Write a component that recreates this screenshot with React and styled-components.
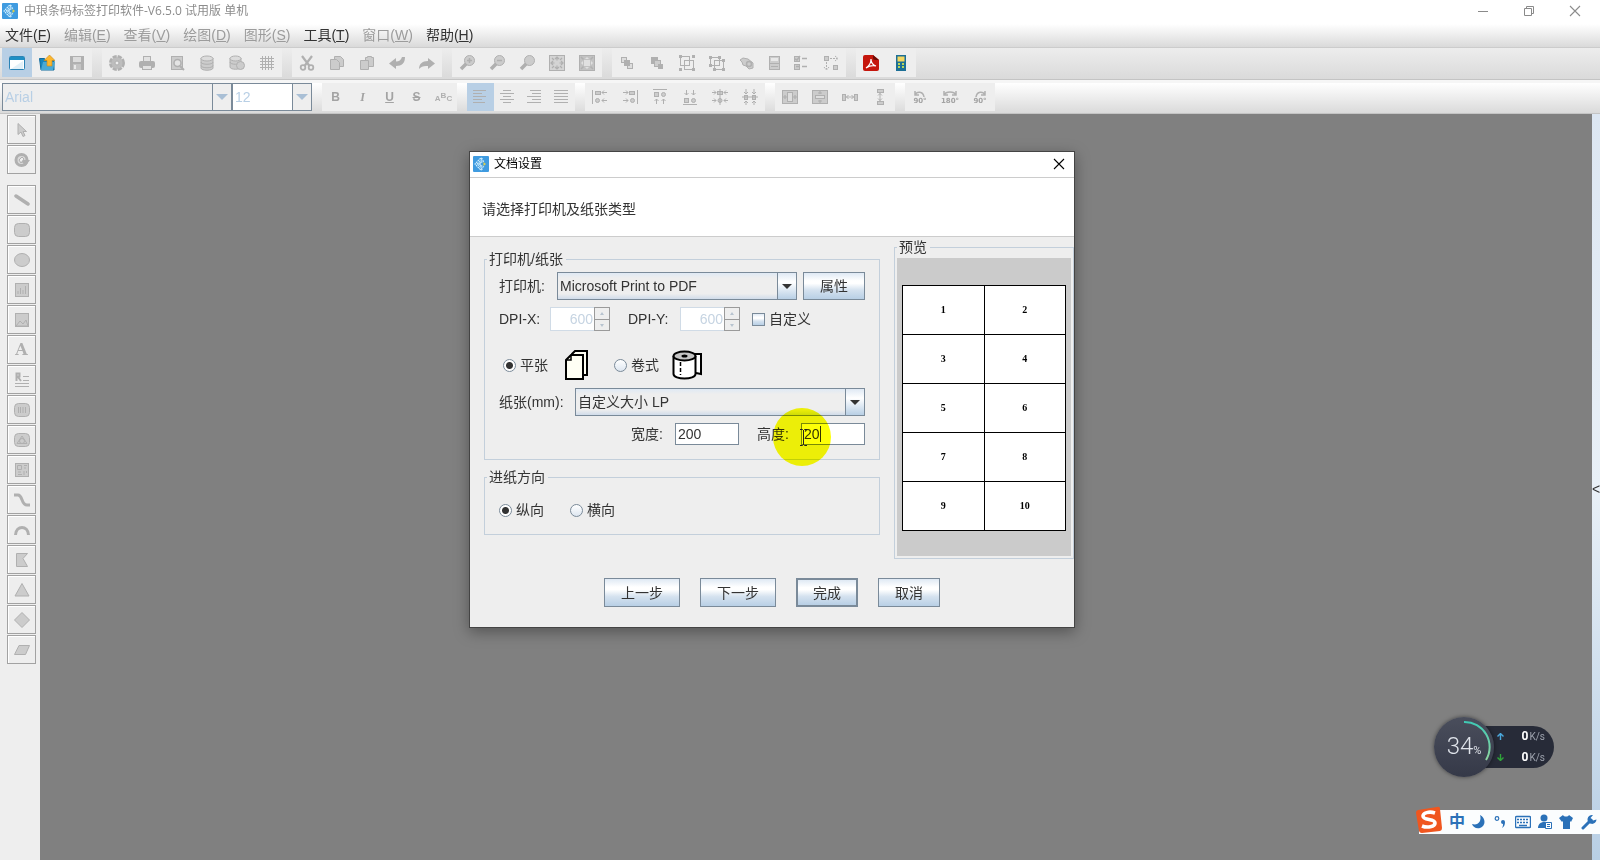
import { useState } from "react";
import styled, { createGlobalStyle, css } from "styled-components";

const GlobalStyle = createGlobalStyle`
  * {
    box-sizing: border-box;
  }

  body {
    margin: 0;
    background: #808080;
  }

  button,
  input,
  select {
    margin: 0;
    font: inherit;
    color: inherit;
  }
`;

const uiFont = `"Liberation Sans", "Noto Sans CJK SC", sans-serif`;

const swingGradient = css`
  background: linear-gradient(
    #dfe9f4 0%,
    #ffffff 30%,
    #ffffff 40%,
    #d5e2ef 65%,
    #b8cfe5 100%
  );
`;

const Page = styled.div`
  display: flex;
  flex-direction: column;
  min-height: 100vh;
  font-family: ${uiFont};
  font-size: 14px;
  line-height: 16px;
  color: #333333;
`;

/* ---------- title bar and menu ---------- */

const TitleBar = styled.header`
  display: flex;
  align-items: center;
  gap: 6px;
  height: 24px;
  padding: 0 17px 2px 2px;
  background: #ffffff;
  font-family: "Open Sans", "Noto Sans CJK SC", sans-serif;
  font-size: 12px;
  color: #8c8c8c;
`;

const AppTitle = styled.h1`
  flex: 1;
  margin: 0;
  font-size: 12px;
  font-weight: 400;
`;

const WindowButtons = styled.div`
  display: flex;
  gap: 30px;
`;

const PlainButton = styled.button`
  display: flex;
  align-items: center;
  justify-content: center;
  width: 16px;
  height: 16px;
  padding: 0;
  border: 0;
  background: none;
`;

const MenuBar = styled.nav`
  display: flex;
  align-items: center;
  gap: 13px;
  height: 24px;
  padding: 0 5px 2px;
  background: linear-gradient(#ffffff, #dadada);
  border-bottom: 1px solid #cccccc;
`;

const MenuItem = styled.button`
  padding: 0;
  border: 0;
  background: none;
  white-space: nowrap;
  color: ${({ disabled }) => (disabled ? "#9c9c9c" : "#333333")};
`;

/* ---------- toolbars ---------- */

const Toolbar = styled.div`
  display: flex;
  align-items: stretch;
  gap: 10px;
  height: ${({ $height }) => $height}px;
  padding: 0 2px 2px;
  background: linear-gradient(${({ $from }) => $from}, #dadada);
  border-bottom: 1px solid #c4c4c4;
`;

const ToolGroup = styled.div`
  display: flex;
  align-items: stretch;
  background: #eeeeee;
`;

const ToolButton = styled.button`
  display: flex;
  align-items: center;
  justify-content: center;
  width: ${({ $width }) => $width || 30}px;
  padding: 0;
  border: 0;
  background: ${({ $selected }) => ($selected ? "#b8cfe5" : "transparent")};
`;

const ToolbarSpacer = styled.div`
  height: 3px;
  background: #f6f6f6;
`;

const Combos = styled.div`
  display: flex;
  align-items: center;
`;

const Select = styled.select`
  appearance: none;
  width: ${({ $width }) => ($width ? `${$width}px` : "auto")};
  flex: ${({ $width }) => ($width ? "none" : "1")};
  height: 28px;
  padding: 0 30px 0 2px;
  border: 1px solid #7a8a99;
  border-radius: 0;
  outline: 0;
  color: #333333;
  opacity: 1;
  background:
    linear-gradient(#7a8a99, #7a8a99) right 18px top 0 / 1px 100% no-repeat,
    url("data:image/svg+xml,%3Csvg xmlns='http://www.w3.org/2000/svg' width='10' height='5'%3E%3Cpath d='M0 0h10L5 5z' fill='%23333'/%3E%3C/svg%3E")
      right 4px center no-repeat,
    linear-gradient(#dfe9f4, #ffffff 35%, #b8cfe5) right / 18px 100% no-repeat,
    linear-gradient(#dfe9f4, #eeeeee 20%, #eeeeee 80%, #d0dcea);

  &:disabled {
    color: #b8cfe5;
    background:
      linear-gradient(#7a8a99, #7a8a99) right 18px top 0 / 1px 100% no-repeat,
      url("data:image/svg+xml,%3Csvg xmlns='http://www.w3.org/2000/svg' width='12' height='6'%3E%3Cpath d='M0 0h12L6 6z' fill='%23a9bfd5'/%3E%3C/svg%3E")
        right 3px center no-repeat,
      linear-gradient(#eeeeee, #eeeeee) right / 18px 100% no-repeat,
      ${({ $fill }) => $fill || "#eeeeee"};
  }
`;

/* ---------- work area ---------- */

const Workspace = styled.main`
  display: flex;
  flex: 1;
  background: #808080;
`;

const SideBar = styled.aside`
  display: flex;
  flex-direction: column;
  gap: 1px;
  width: 40px;
  padding: 1px 4px 0 7px;
  background: #eeeeee;
`;

const SideButton = styled.button`
  display: flex;
  align-items: center;
  justify-content: center;
  width: 29px;
  height: 29px;
  padding: 0;
  margin-top: ${({ $spaced }) => ($spaced ? 10 : 0)}px;
  border: 1px solid #a2a2a2;
  background: #eeeeee;
  box-shadow: inset 1px 1px 0 #ffffff;
`;

const Canvas = styled.section`
  position: relative;
  flex: 1;
`;

const CollapseStrip = styled.button`
  display: flex;
  align-items: center;
  justify-content: center;
  width: 8px;
  padding: 4px 0 0 0;
  border: 0;
  background: linear-gradient(#dce6f2, #e9f0f7 50%, #b8cfe5);
`;

/* ---------- dialog ---------- */

const Dialog = styled.div`
  position: absolute;
  left: 429px;
  top: 37px;
  width: 606px;
  border: 1px solid #444444;
  background: #eeeeee;
  box-shadow: 0 4px 14px rgba(0, 0, 0, 0.35);
`;

const DialogTitle = styled.div`
  display: flex;
  align-items: center;
  gap: 5px;
  height: 26px;
  padding: 0 7px 1px 3px;
  background: #ffffff;
  border-bottom: 1px solid #cccccc;
  color: #000000;
`;

const DialogName = styled.h2`
  flex: 1;
  margin: 0;
  font-size: 12px;
  font-weight: 400;
`;

const DialogHeading = styled.p`
  display: flex;
  align-items: center;
  height: 59px;
  margin: 0;
  padding: 4px 12px 0;
  background: #ffffff;
  border-bottom: 1px solid #cccccc;
`;

const DialogBody = styled.div`
  display: flex;
  gap: 14px;
  padding-left: 14px;
`;

const Settings = styled.div`
  display: flex;
  flex-direction: column;
  gap: 9px;
  width: 396px;
  padding-top: 14px;
`;

const Group = styled.fieldset`
  min-width: 0;
  margin: 0;
  padding: ${({ $padding }) => $padding};
  border: 1px solid #c3cfdb;
`;

const Legend = styled.legend`
  height: 16px;
  margin-left: ${({ $indent }) => $indent || 0}px;
  padding: 0 3px 0 2px;
  white-space: nowrap;
`;

const Row = styled.div`
  display: flex;
  align-items: center;
  justify-content: ${({ $end }) => ($end ? "flex-end" : "flex-start")};
  height: ${({ $height }) => $height}px;
  margin-top: ${({ $space }) => $space || 0}px;
`;

const Label = styled.label`
  width: ${({ $width }) => $width}px;
  flex: none;
  white-space: nowrap;
`;

const Button = styled.button`
  ${swingGradient}
  height: ${({ $height }) => $height || 28}px;
  width: ${({ $width }) => $width}px;
  padding: 0;
  margin-left: ${({ $space }) => $space || 0}px;
  border: ${({ $primary }) => ($primary ? 2 : 1)}px solid #7a8a99;
`;

const Spinner = styled.div`
  display: flex;
  width: 60px;
  height: 24px;
  margin-right: ${({ $space }) => $space}px;
`;

const SpinnerInput = styled.input`
  width: 44px;
  padding: 0 1px;
  border: 1px solid #d0dbe6;
  border-right: 0;
  background: #ffffff;
  color: #c6d4e2;
  text-align: right;
`;

const SpinnerButtons = styled.div`
  display: grid;
  grid-template-rows: 1fr 1fr;
  width: 16px;
  border: 1px solid #9a9a9a;
`;

const SpinnerButton = styled.button`
  display: flex;
  align-items: center;
  justify-content: center;
  padding: 0;
  border: 0;
  background: #eeeeee;

  & + & {
    border-top: 1px solid #9a9a9a;
  }
`;

const Choice = styled.label`
  display: flex;
  align-items: center;
  gap: ${({ $gap }) => $gap || 4}px;
  margin-right: ${({ $space }) => $space || 0}px;
  white-space: nowrap;
`;

const PaperChoices = styled.div`
  display: flex;
  padding-left: 4px;
`;

const CheckBox = styled.input`
  ${swingGradient}
  appearance: none;
  width: 13px;
  height: 13px;
  border: 1px solid #7a8a99;
`;

const Radio = styled.input`
  appearance: none;
  width: 13px;
  height: 13px;
  border: 1px solid #7a8a99;
  border-radius: 50%;
  background: linear-gradient(#ffffff, #dde6f0);

  &:checked {
    background: radial-gradient(circle, #333333 3px, transparent 4px), #ffffff;
  }
`;

const SizeInput = styled.input`
  width: 64px;
  height: 22px;
  padding: 0 2px;
  border: 1px solid #7a8a99;
  outline: 0;
  background: #ffffff;
  caret-color: transparent;
`;

const SizeField = styled.div`
  position: relative;
  display: flex;
  margin-right: ${({ $space }) => $space || 0}px;
`;

const PointerHalo = styled.span`
  position: absolute;
  left: -28px;
  top: -15px;
  width: 58px;
  height: 58px;
  border-radius: 50%;
  background: #fdff08;
  mix-blend-mode: multiply;
  pointer-events: none;
`;

const Caret = styled.span`
  position: absolute;
  left: 19px;
  top: 3px;
  width: 1px;
  height: 16px;
  background: #333333;
`;

const PointerMark = styled.svg`
  position: absolute;
  left: -1px;
  top: 6px;
  pointer-events: none;
`;

const Preview = styled.div`
  display: flex;
  flex: 1;
  flex-direction: column;
  padding-top: 2px;
`;

const PreviewPane = styled.div`
  padding: 27px 5px 25px;
  background: #cbcbcb;
`;

const LabelTable = styled.table`
  width: 100%;
  border-collapse: collapse;
  background: #ffffff;
  font-family: "Liberation Serif", serif;
  font-size: 10px;
  font-weight: 700;
  line-height: 12px;
  color: #000000;

  td {
    width: 50%;
    height: 49px;
    padding: 0;
    border: 1px solid #000000;
    text-align: center;
  }
`;

const Footer = styled.div`
  display: flex;
  justify-content: center;
  gap: 20px;
  padding: 19px 0 20px;
`;

/* ---------- floating widgets ---------- */

const NetMonitor = styled.div`
  position: absolute;
  right: 38px;
  bottom: 83px;
  display: flex;
  align-items: center;
  color: #dfe3ea;
`;

const Gauge = styled.div`
  position: relative;
  z-index: 1;
  display: flex;
  align-items: baseline;
  justify-content: center;
  width: 60px;
  height: 60px;
  padding-top: 17px;
  border-radius: 50%;
  background: linear-gradient(#4a4e5c, #353948);
  box-shadow: 0 0 4px rgba(0, 0, 0, 0.5);
  font-family: Roboto, sans-serif;
  font-size: 24px;
  font-weight: 300;
  line-height: 24px;

  small {
    font-size: 11px;
    font-weight: 400;
  }
`;

const GaugeArc = styled.svg`
  position: absolute;
  inset: 0;
`;

const Rates = styled.div`
  display: flex;
  flex-direction: column;
  justify-content: space-between;
  width: 90px;
  height: 42px;
  margin-left: -30px;
  padding: 2px 9px 2px 33px;
  border-radius: 0 21px 21px 0;
  background: #272b38;
`;

const Rate = styled.div`
  display: flex;
  align-items: center;
  justify-content: space-between;
  font-family: Roboto, sans-serif;
  font-size: 10px;
  color: #9ea3ae;

  b {
    margin-right: 1px;
    font-size: 12px;
    color: #ffffff;
  }
`;

const ImeBar = styled.div`
  position: absolute;
  right: -8px;
  bottom: 26px;
  display: flex;
  align-items: center;
  gap: 6px;
  height: 24px;
  padding: 0 3px 0 30px;
  background: #fbfdfe;
  font-size: 16px;
  font-weight: 700;
  color: #2b71b8;
`;

const ImeLogo = styled.svg`
  position: absolute;
  left: -5px;
  top: -5px;
`;

/* ---------- icons ---------- */

const G = "#cccccc";
const S = "#b0b0b0";

const box = (x, y, w, h, fill = G) => (
  <rect x={x + 0.5} y={y + 0.5} width={w} height={h} fill={fill} stroke={S} />
);

const line = (d, width = 1) => (
  <path d={d} fill="none" stroke={S} strokeWidth={width} />
);

const shape = (d) => <path d={d} fill={G} stroke={S} />;

const icons = {
  newDoc: (
    <>
      <rect x="0.5" y="1.5" width="15" height="13" rx="1" fill="#fff" stroke="#2b83b5" />
      <rect x="1" y="2" width="14" height="3" fill="#1f8fc4" />
      <path d="M2 14 14 6v8z" fill="#e2f0f8" />
    </>
  ),
  open: (
    <>
      <path d="M0.5 3.5h5l1 2H15v9.500H2z" fill="#1785bd" stroke="#0f6a9c" />
      <path d="M2 15 4 7h12l-2 8z" fill="#49a9d6" />
      <path d="M10.500 0 16 5.500h-3V11H8V5.500H5z" fill="#fbb62e" stroke="#c98a17" strokeWidth=".6" />
    </>
  ),
  save: (
    <>
      <rect x="1" y="1" width="14" height="14" fill={S} />
      <rect x="4" y="2" width="8" height="5" fill="#dcdcdc" />
      <rect x="4" y="9" width="8" height="6" fill="#c4c4c4" />
      <rect x="5" y="10" width="2" height="4" fill="#e8e8e8" />
    </>
  ),
  gear: (
    <>
      <circle cx="8" cy="8" r="6.500" fill={G} stroke={S} strokeWidth="3" strokeDasharray="4 1.100" />
      <circle cx="8" cy="8" r="5.500" fill="#bdbdbd" />
      <circle cx="8" cy="8" r="2" fill="#eee" stroke={S} />
    </>
  ),
  print: (
    <>
      {box(4, 1, 7, 5, "#e2e2e2")}
      <rect x="0" y="6" width="16" height="7" rx="2" fill={S} />
      {box(3, 10, 9, 4, "#e2e2e2")}
    </>
  ),
  previewDoc: (
    <>
      {box(2, 1, 11, 13)}
      <circle cx="8.500" cy="8" r="3.500" fill="#e4e4e4" stroke={S} strokeWidth="1.500" />
      {line("m11 11 4 4", 2)}
    </>
  ),
  database: (
    <>
      <path d="M2 3v10c0 3 12 3 12 0V3" fill={G} stroke={S} />
      <ellipse cx="8" cy="3.500" rx="6" ry="2.500" fill="#dcdcdc" stroke={S} />
      {line("M2 7c0 3 12 3 12 0M2 10.500c0 3 12 3 12 0")}
    </>
  ),
  databaseEdit: (
    <>
      <path d="M1 3v9c0 3 11 3 11 0V3" fill={G} stroke={S} />
      <ellipse cx="6.500" cy="3.500" rx="5.500" ry="2.500" fill="#dcdcdc" stroke={S} />
      {line("M1 7c0 3 11 3 11 0")}
      <circle cx="11.500" cy="10.500" r="4" fill={G} stroke={S} />
    </>
  ),
  grid: line("M3.500 1v14M6.500 1v14M9.500 1v14M12.500 1v14M1 3.500h14M1 6.500h14M1 9.500h14M1 12.500h14"),
  cut: (
    <>
      {line("M3 1l7.500 10M13 1 5.500 11", 2.2)}
      <circle cx="4" cy="12.500" r="2.300" fill="none" stroke={S} strokeWidth="1.800" />
      <circle cx="12" cy="12.500" r="2.300" fill="none" stroke={S} strokeWidth="1.800" />
    </>
  ),
  copy: (
    <>
      {shape("M5.500 1.500h6l3 3v7h-9z")}
      {shape("M1.500 4.500h6l3 3v7h-9z")}
    </>
  ),
  paste: (
    <>
      {shape("M6.500 2.500h2v-1h4v1h2v9h-8z")}
      {shape("M1.500 5.500h8v9h-8z")}
    </>
  ),
  undo: <path d="M0 8.500 7 3v3.500c3 0 5-1.500 6-4.500h3c0 6-3 9-9 9v3z" fill={S} />,
  redo: <path d="M16 8.500 9 3v3C3 6 0 9 0 14c2-2.500 5-3.500 9-3v3z" fill={S} />,
  zoomIn: (
    <>
      {line("M8 8 2 14", 3.5)}
      <circle cx="10.500" cy="5.500" r="5" fill={G} stroke={S} />
      {line("M8 5.500h5M10.500 3v5", 1.5)}
    </>
  ),
  zoomOut: (
    <>
      {line("M8 8 2 14", 3.5)}
      <circle cx="10.500" cy="5.500" r="5" fill={G} stroke={S} />
      {line("M8 5.500h5", 1.5)}
    </>
  ),
  zoom: (
    <>
      {line("M8 8 2 14", 3.5)}
      <circle cx="10.500" cy="5.500" r="5" fill={G} stroke={S} />
    </>
  ),
  fit: (
    <>
      {box(0, 0, 15, 15, "#d4d4d4")}
      {line("M8 1.500v4M8 10.500v4M1.500 8h4M10.500 8h4M6 4l2-2 2 2M6 12l2 2 2-2M4 6 2 8l2 2M12 6l2 2-2 2M3 3l2 2M13 3l-2 2M3 13l2-2M13 13l-2-2", 1.2)}
    </>
  ),
  fitAll: (
    <>
      {box(0, 0, 15, 15, "#c2c2c2")}
      <rect x="5" y="5" width="6" height="6" fill="#e0e0e0" />
      <path d="M6 4l2-2 2 2zM6 12l2 2 2-2zM4 6 2 8l2 2zM12 6l2 2-2 2z" fill="#e0e0e0" />
      {line("M2 2l2.500 2.500M14 2l-2.500 2.500M2 14l2.500-2.500M14 14l-2.500-2.500", 1.5)}
    </>
  ),
  front: (
    <>
      {box(2, 2, 5, 5, "#ddd")}
      {box(8, 8, 5, 5, "#ddd")}
      <rect x="5" y="5" width="6" height="6" fill={S} />
    </>
  ),
  back: (
    <>
      <rect x="2" y="2" width="7" height="7" fill={S} />
      {box(5, 5, 6, 6)}
      <rect x="9" y="9" width="5" height="5" fill={S} />
    </>
  ),
  group: (
    <>
      {box(1, 1, 9, 9, "none")}
      {box(5, 5, 9, 9, "none")}
      <path d="M0 0h3v3H0zM13 0h3v3h-3zM0 13h3v3H0zM13 13h3v3h-3z" fill={S} />
    </>
  ),
  ungroup: (
    <>
      {box(1, 2, 9, 8, "none")}
      {box(5, 5, 9, 9, "none")}
      <path d="M0 1h3v3H0zM9 1h3v3H9zM0 9h3v3H0zM4 13h3v3H4zM13 4h3v3h-3zM13 13h3v3h-3z" fill={S} />
    </>
  ),
  lock: (
    <>
      {shape("M1 5l3-2 5 1 5 4v5l-4 1-3-3-3-1-1-3z")}
      <circle cx="10" cy="9" r="2.500" fill="none" stroke={S} strokeWidth="1.500" />
    </>
  ),
  book: (
    <>
      {box(3, 1, 10, 13)}
      <rect x="5" y="3" width="7" height="3" fill="#e8e8e8" />
      {line("M3 8.500h11M5 11.500h7")}
    </>
  ),
  checklist: (
    <>
      {box(1, 1, 5, 5)}
      {box(1, 9, 5, 5)}
      {line("M9 3.500h5M9 11.500h5M2 4l2 1 3-4M3 11.500h3", 1.500)}
    </>
  ),
  swap: (
    <>
      {box(1, 1, 4, 4)}
      {box(10, 10, 4, 4)}
      <path d="M7 3.500h7M12 1l3 2.500L12 6M3.500 7v7M1 12l2.500 3L6 12" fill="none" stroke={S} strokeDasharray="2 1" />
    </>
  ),
  pdf: (
    <>
      <path d="M2 0h8l6 5v9a2 2 0 0 1-2 2H2a2 2 0 0 1-2-2V2a2 2 0 0 1 2-2z" fill="#c5160c" />
      <path d="M10 0l6 5h-4a2 2 0 0 1-2-2z" fill="#6d0c06" />
      <path d="M3 13c3-2 5-6 5-9 0 4 2 6 5 7-4-1-7 0-10 2z" fill="none" stroke="#fff" strokeWidth="1.200" />
    </>
  ),
  calculator: (
    <>
      <rect x="3" y="0" width="10" height="16" fill="#1c6f96" />
      <rect x="4.500" y="1.500" width="7" height="5" fill="#f5d860" />
      <path d="M5 8h2v2H5zM9 8h2v2H9zM5 11h2v2H5zM9 11h2v2H9z" fill="#b9d65a" />
    </>
  ),
  alignLeft: line("M0 1.500h13M0 4.500h9M0 7.500h13M0 10.500h9M0 13.500h12"),
  alignCenter: line("M3 1.500h8M0 4.500h14M3 7.500h8M0 10.500h14M3 13.500h8"),
  alignRight: line("M3 1.500h11M5 4.500h9M0 7.500h14M5 10.500h9M0 13.500h14"),
  alignFull: line("M0 1.500h14M0 4.500h14M0 7.500h14M0 10.500h14M0 13.500h14"),
  objLeft: (
    <>
      {box(3, 2, 5, 3)}
      <circle cx="5.500" cy="11.500" r="2" fill={G} stroke={S} />
      {line("M0.500 1v14M10 3.500h5M12 1.500l-2 2 2 2M10 11.500h5M12 9.500l-2 2 2 2")}
    </>
  ),
  objRight: (
    <>
      {box(7, 2, 5, 3)}
      <circle cx="10.500" cy="11.500" r="2" fill={G} stroke={S} />
      {line("M15.500 1v14M1 3.500h5M4 1.500l2 2-2 2M1 11.500h5M4 9.500l2 2-2 2")}
    </>
  ),
  objTop: (
    <>
      {box(2, 3, 4, 4)}
      <circle cx="11.500" cy="5.500" r="2" fill={G} stroke={S} />
      {line("M1 .500h14M4.500 15v-5M2.500 12l2-2 2 2M11.500 15v-5M9.500 12l2-2 2 2")}
    </>
  ),
  objBottom: (
    <>
      {box(2, 9, 4, 4)}
      <circle cx="11.500" cy="11.500" r="2" fill={G} stroke={S} />
      {line("M1 15.500h14M4.500 1v5M2.500 4l2 2 2-2M11.500 1v5M9.500 4l2 2 2-2")}
    </>
  ),
  objCenterV: (
    <>
      {box(5, 2, 5, 3)}
      <circle cx="8" cy="11.500" r="2" fill={G} stroke={S} />
      {line("M8 0v16M0 3.500h4M2 1.500l2 2-2 2M16 3.500h-4M14 1.500l-2 2 2 2M0 11.500h4M2 9.500l2 2-2 2M16 11.500h-4M14 9.500l-2 2 2 2")}
    </>
  ),
  objCenterH: (
    <>
      {box(2, 6, 3, 4)}
      {box(10, 6, 3, 4)}
      {line("M0 8h16M4 0v5M2 3l2 2 2-2M4 16v-4M2 14l2-2 2 2M12 0v5M10 3l2 2 2-2M12 16v-4M10 14l2-2 2 2")}
    </>
  ),
  pageCenterH: (
    <>
      {box(0, 1, 15, 13)}
      {box(5, 3, 5, 9, "#dedede")}
      {line("M1 8h4M11 8h4M3 6v4M13 6v4", 1.2)}
    </>
  ),
  pageCenterV: (
    <>
      {box(0, 1, 15, 13)}
      {box(3, 6, 9, 3, "#dedede")}
      {line("M8 2v3M8 11v3M6 4h4M6 12h4", 1.2)}
    </>
  ),
  spaceH: (
    <>
      {box(0, 5, 3, 6)}
      {box(12, 5, 3, 6)}
      {line("M4 8h8M6.500 6l-2 2 2 2M9.500 6l2 2-2 2")}
    </>
  ),
  spaceV: (
    <>
      {box(5, 0, 6, 3)}
      {box(5, 12, 6, 3)}
      {line("M8 4v8M6 6.500l2-2 2 2M6 9.500l2 2 2-2")}
    </>
  ),
  pointer: shape("M4 1.500v11l3-2.500 2 4.500 2-1-2-4h3.500z"),
  rotateHand: (
    <>
      <circle cx="7.500" cy="8" r="5.500" fill="#dadada" stroke={S} strokeWidth="3" />
      <path d="M6 8h10l-4.500 6z" fill={S} />
      <path d="M5 8l3-3 2 2-3 4z" fill="#eee" stroke={S} />
    </>
  ),
  pen: <path d="M2 4 14 12" stroke={S} strokeWidth="3.500" strokeLinecap="round" />,
  roundRect: <rect x="0.500" y="1.500" width="15" height="13" rx="4" fill={G} stroke={S} />,
  ellipse: <ellipse cx="8" cy="8" rx="7.500" ry="6.500" fill={G} stroke={S} />,
  barcode: (
    <>
      {box(1, 1, 13, 13)}
      {line("M4 12V9M6.500 12V6M9 12V8M11.500 12V4")}
    </>
  ),
  picture: (
    <>
      {box(1, 1, 13, 13)}
      {shape("M2 14l4-5 3 3 3-4 2 6z")}
    </>
  ),
  richText: (
    <>
      {line("M2.500 9V1.500h3v3h-3M4 5l3 4", 2)}
      {line("M9 4.500h6M9 8.500h6M1 11.500h14M1 14.500h14")}
    </>
  ),
  barcodeRound: (
    <>
      <rect x="0.500" y="1.500" width="15" height="13" rx="4" fill={G} stroke={S} />
      {line("M4.500 5v6M6.500 5v6M9 5v6M11.500 5v6")}
    </>
  ),
  shapeRound: (
    <>
      <rect x="0.500" y="1.500" width="15" height="13" rx="4" fill={G} stroke={S} />
      {line("M3 11.500 8 4l5 7.500z")}
      <circle cx="8" cy="9" r="2.500" fill="none" stroke={S} />
    </>
  ),
  qr: (
    <>
      {box(1, 1, 13, 13)}
      {line("M3.500 3.500h4v4h-4zM10 3.500h3M10 6h2M4 10h3M4 12.500h4M10 9v4M12.500 9v2")}
    </>
  ),
  sCurve: line("M0 3h4c5 0 3 10 9 10h3", 3),
  arc: line("M1.500 13C2 3 14 3 14.500 13", 3),
  polygon: shape("M2.500 1.500h11L9 6.500l4.500 8h-11z"),
  triangle: shape("M8 1.500 15 14H1z"),
  diamond: shape("M8 .500 15.500 8 8 15.500.500 8z"),
  parallelogram: shape("M5 3.500h10.500l-4 9H.500z"),
  minimise: <path d="M3 8.500h10" stroke="#8a8a8a" />,
  restore: <path d="M3.500 5.500h7v7h-7zM5.500 5V3.500h7v7H11" fill="none" stroke="#8a8a8a" />,
  close: <path d="M3 3l10 10M13 3 3 13" stroke="currentColor" strokeWidth="1.100" />,
};

const Icon = ({ name, size = 16 }) => (
  <svg width={size} height={size} viewBox="0 0 16 16" aria-hidden="true">
    {icons[name]}
  </svg>
);

const Glyph = styled.span`
  font-size: 12px;
  line-height: 14px;
  font-weight: 700;
  font-style: ${({ $italic }) => ($italic ? "italic" : "normal")};
  font-family: ${({ $serif }) => ($serif ? `"Liberation Serif", serif` : uiFont)};
  text-decoration: ${({ $line }) => $line || "none"};
  color: #a3a3a3;
`;

const CurvedText = styled.span`
  display: flex;
  font-size: 8px;
  line-height: 10px;
  font-weight: 700;
  color: #b0b0b0;

  span:nth-child(2) {
    padding-bottom: 3px;
  }

  span:nth-child(odd) {
    padding-top: 3px;
  }
`;

const LetterA = styled.span`
  font-family: "DejaVu Serif", serif;
  font-size: 16px;
  font-weight: 700;
  color: #b0b0b0;
`;

const Turn = styled.span`
  display: flex;
  flex-direction: column;
  align-items: center;
  font-family: "DejaVu Sans", sans-serif;
  font-size: 7px;
  line-height: 7px;
  font-weight: 700;
  color: #a3a3a3;
`;

const AppLogo = () => (
  <svg width="16" height="16" viewBox="0 0 16 16" aria-hidden="true">
    <rect width="16" height="16" rx="1" fill="#3f9be0" />
    <g fill="none" stroke="#d9f3ff" strokeWidth="1.100">
      <path d="M9.500 3 8 1.800 2 8l6 6.200L9.500 13" strokeDasharray="1.800 .6" />
      <path d="M11 5.500 8.500 3.800 4.300 8l4.200 4.200L11 10.500" strokeDasharray="1.800 .6" />
      <path d="M9.500 6 8.500 5.800 6.500 8l2 2.200 1-.2" />
    </g>
    <path d="M10.500 6l2.500 2-2.500 2z" fill="#e0d24c" />
  </svg>
);

const SheetIcon = () => (
  <svg width="24" height="30" viewBox="0 0 24 30" aria-hidden="true">
    <path d="M7 6V4l3-3h12v24h-4" fill="#fffff4" stroke="#000" strokeWidth="2" />
    <path d="M1 10l5-5h12v24H1z" fill="#fffff4" stroke="#000" strokeWidth="2" />
    <path d="M1 10h5V5" fill="none" stroke="#000" strokeWidth="1.500" />
  </svg>
);

const RollIcon = () => (
  <svg width="31" height="30" viewBox="0 0 31 30" aria-hidden="true">
    <path d="M22 4h7v20l-5-1" fill="#fff" stroke="#000" strokeWidth="2" />
    <path d="M1.500 6v18c0 6 22 6 22 0V6" fill="#fff" stroke="#000" strokeWidth="2" />
    <ellipse cx="12.500" cy="6" rx="11" ry="4.500" fill="#c4c4c4" stroke="#000" strokeWidth="2" />
    <ellipse cx="12.500" cy="6" rx="3" ry="1.500" fill="#000" />
    <path d="M8.500 12v13" stroke="#000" strokeWidth="1.500" strokeDasharray="4 2" />
  </svg>
);

/* ---------- data ---------- */

const menus = [
  { name: "文件", key: "F" },
  { name: "编辑", key: "E", off: true },
  { name: "查看", key: "V", off: true },
  { name: "绘图", key: "D", off: true },
  { name: "图形", key: "S", off: true },
  { name: "工具", key: "T" },
  { name: "窗口", key: "W", off: true },
  { name: "帮助", key: "H" },
];

const mainTools = [
  ["newDoc", "open", "save"],
  ["gear", "print", "previewDoc", "database", "databaseEdit", "grid"],
  ["cut", "copy", "paste", "undo", "redo"],
  ["zoomIn", "zoomOut", "zoom", "fit", "fitAll"],
  ["front", "back", "group", "ungroup", "lock", "book", "checklist", "swap"],
  ["pdf", "calculator"],
];

const textAligns = ["alignLeft", "alignCenter", "alignRight", "alignFull"];
const objectAligns = ["objLeft", "objRight", "objTop", "objBottom", "objCenterV", "objCenterH"];
const pageAligns = ["pageCenterH", "pageCenterV", "spaceH", "spaceV"];

const turns = [
  { text: "90°", path: "M2 1v4h4M2 5c2-4 8-4 9 2" },
  { text: "180°", path: "M1 1v4h4M1 5c2-4 10-4 12 0M13 1v4H9" },
  { text: "90°", path: "M12 1v4H8M12 5c-2-4-8-4-9 2" },
];

const drawTools = [
  "pointer", "rotateHand", "pen", "roundRect", "ellipse", "barcode", "picture", "letter",
  "richText", "barcodeRound", "shapeRound", "qr", "sCurve", "arc", "polygon", "triangle",
  "diamond", "parallelogram",
];

const labelRows = [[1, 2], [3, 4], [5, 6], [7, 8], [9, 10]];

/* ---------- parts ---------- */

const DpiSpinner = ({ id, space }) => (
  <Spinner $space={space}>
    <SpinnerInput id={id} type="text" value="600" disabled readOnly />
    <SpinnerButtons>
      <SpinnerButton disabled aria-label="增加">
        <svg width="4" height="3"><path d="M0 3 2 0l2 3z" fill="#b8c4d0" /></svg>
      </SpinnerButton>
      <SpinnerButton disabled aria-label="减少">
        <svg width="4" height="3"><path d="M0 0h4L2 3z" fill="#b8c4d0" /></svg>
      </SpinnerButton>
    </SpinnerButtons>
  </Spinner>
);

const DocumentDialog = () => {
  const [custom, setCustom] = useState(false);
  const [paper, setPaper] = useState("sheet");
  const [direction, setDirection] = useState("portrait");
  const [width, setWidth] = useState("200");
  const [height, setHeight] = useState("20");

  return (
    <Dialog role="dialog" aria-labelledby="dialog-name">
      <DialogTitle>
        <AppLogo />
        <DialogName id="dialog-name">文档设置</DialogName>
        <PlainButton aria-label="关闭"><Icon name="close" /></PlainButton>
      </DialogTitle>
      <DialogHeading>请选择打印机及纸张类型</DialogHeading>

      <DialogBody>
        <Settings>
          <Group $padding="5px 14px 14px">
            <Legend $indent={-12}>打印机/纸张</Legend>
            <Row $height={28}>
              <Label $width={58} htmlFor="printer">打印机:</Label>
              <Select id="printer">
                <option>Microsoft Print to PDF</option>
              </Select>
              <Button type="button" $width={62} $space={6}>属性</Button>
            </Row>
            <Row $height={24} $space={7}>
              <Label $width={51} htmlFor="dpi-x">DPI-X:</Label>
              <DpiSpinner id="dpi-x" space={18} />
              <Label $width={52} htmlFor="dpi-y">DPI-Y:</Label>
              <DpiSpinner id="dpi-y" space={12} />
              <Choice>
                <CheckBox
                  type="checkbox"
                  checked={custom}
                  onChange={(e) => setCustom(e.target.checked)}
                />
                自定义
              </Choice>
            </Row>
            <Row $height={30} $space={19}>
              <PaperChoices>
                <Choice $space={25} $gap={17}>
                  <Choice as="span">
                    <Radio type="radio" name="paper" checked={paper === "sheet"} onChange={() => setPaper("sheet")} />
                    平张
                  </Choice>
                  <SheetIcon />
                </Choice>
                <Choice $gap={13}>
                  <Choice as="span">
                    <Radio type="radio" name="paper" checked={paper === "roll"} onChange={() => setPaper("roll")} />
                    卷式
                  </Choice>
                  <RollIcon />
                </Choice>
              </PaperChoices>
            </Row>
            <Row $height={28} $space={8}>
              <Label $width={76} htmlFor="paper-size">纸张(mm):</Label>
              <Select id="paper-size">
                <option>自定义大小 LP</option>
              </Select>
            </Row>
            <Row $height={22} $space={7} $end>
              <Label $width={44} htmlFor="width">宽度:</Label>
              <SizeField $space={18}>
                <SizeInput id="width" type="text" value={width} onChange={(e) => setWidth(e.target.value)} />
              </SizeField>
              <Label $width={44} htmlFor="height">高度:</Label>
              <SizeField>
                <SizeInput id="height" type="text" value={height} onChange={(e) => setHeight(e.target.value)} />
                <Caret />
                <PointerHalo />
                <PointerMark width="7" height="17" viewBox="0 0 7 17">
                  <path d="M0 .5h2.500l1 1 1-1H7M3.500 1v15M0 16.500h2.500l1-1 1 1H7" fill="none" stroke="#222" />
                </PointerMark>
              </SizeField>
            </Row>
          </Group>

          <Group $padding="13px 14px 12px">
            <Legend $indent={-12}>进纸方向</Legend>
            <Row $height={24}>
              <Choice $space={26}>
                <Radio type="radio" name="direction" checked={direction === "portrait"} onChange={() => setDirection("portrait")} />
                纵向
              </Choice>
              <Choice>
                <Radio type="radio" name="direction" checked={direction === "landscape"} onChange={() => setDirection("landscape")} />
                横向
              </Choice>
            </Row>
          </Group>
        </Settings>

        <Preview>
          <Group $padding="3px 2px 2px">
            <Legend>预览</Legend>
            <PreviewPane>
              <LabelTable>
                <tbody>
                  {labelRows.map((row) => (
                    <tr key={row[0]}>
                      {row.map((n) => (
                        <td key={n}>{n}</td>
                      ))}
                    </tr>
                  ))}
                </tbody>
              </LabelTable>
            </PreviewPane>
          </Group>
        </Preview>
      </DialogBody>

      <Footer>
        <Button type="button" $width={76} $height={29}>上一步</Button>
        <Button type="button" $width={76} $height={29}>下一步</Button>
        <Button type="button" $width={62} $height={29} $primary>完成</Button>
        <Button type="button" $width={62} $height={29}>取消</Button>
      </Footer>
    </Dialog>
  );
};

const NetworkWidget = () => (
  <NetMonitor>
    <Gauge>
      34<small>%</small>
      <GaugeArc width="60" height="60" viewBox="0 0 60 60">
        <defs>
          <linearGradient id="arc" x2="0" y2="1">
            <stop offset="0" stopColor="#3fc9b4" />
            <stop offset="1" stopColor="#8fd6a0" />
          </linearGradient>
        </defs>
        <path d="M30 5a25 25 0 0 1 22 38" fill="none" stroke="url(#arc)" strokeWidth="2" />
      </GaugeArc>
    </Gauge>
    <Rates>
      {["#4aa8dc", "#2fa53a"].map((color, i) => (
        <Rate key={color}>
          <svg width="7" height="7" viewBox="0 0 7 7">
            <path
              d={i ? "M3.500 0v6M.500 3.500l3 3 3-3" : "M3.500 7V1M.500 3.500l3-3 3 3"}
              fill="none"
              stroke={color}
              strokeWidth="1.400"
            />
          </svg>
          <span><b>0</b>K/s</span>
        </Rate>
      ))}
    </Rates>
  </NetMonitor>
);

const InputMethodBar = () => (
  <ImeBar>
    <ImeLogo width="30" height="30" viewBox="0 0 30 30">
      <path d="M4 5 23 2a2 2 0 0 1 3 2l2 19a3 3 0 0 1-2 3L8 28a3 3 0 0 1-3-2L2 8a3 3 0 0 1 2-3z" fill="#f0561f" />
      <path d="M21 8C15 6 9 8 9 11c0 5 12 2 12 7 0 4-8 5-13 3" fill="none" stroke="#fff" strokeWidth="3.600" />
    </ImeLogo>
    <span>中</span>
    <svg width="16" height="16" viewBox="0 0 16 16">
      <path d="M9 1c6 3 6 11 0 13-4 1-7-1-8-4 6 2 10-3 8-9z" fill="#2b71b8" />
    </svg>
    <svg width="16" height="16" viewBox="0 0 16 16">
      <circle cx="4" cy="4.500" r="1.800" fill="none" stroke="#2b71b8" strokeWidth="1.200" />
      <path d="M8 8a2 2 0 1 1 4 0c0 3-1 5-3 6 1-2 1-3 1-4a2 2 0 0 1-2-2z" fill="#2b71b8" />
    </svg>
    <svg width="16" height="16" viewBox="0 0 16 16">
      <rect x="0.500" y="2.500" width="15" height="11" rx="1" fill="none" stroke="#2b71b8" strokeWidth="1.400" />
      <path d="M2 5.500h12M2 8.500h12" stroke="#2b71b8" strokeWidth="1.700" strokeDasharray="2 1" />
      <path d="M4 11.500h8" stroke="#2b71b8" strokeWidth="1.500" />
    </svg>
    <svg width="16" height="16" viewBox="0 0 16 16">
      <circle cx="7" cy="4" r="3.500" fill="#2b71b8" />
      <path d="M1 14c0-8 12-8 12 0z" fill="#2b71b8" />
      <path d="M8.500 8.500h6v6h-6z" fill="#fff" stroke="#2b71b8" />
      <path d="M10 10.500h3M10 12.500h3" stroke="#2b71b8" />
    </svg>
    <svg width="16" height="16" viewBox="0 0 16 16">
      <path d="M4 1c1 2 5 2 6 0l4 3-2 4-1-1v8H4V7L3 8 0 4z" fill="#2b71b8" />
    </svg>
    <svg width="16" height="16" viewBox="0 0 16 16">
      <path d="M2 14 10 6" stroke="#2b71b8" strokeWidth="3" strokeLinecap="round" />
      <path d="M12 1a4.500 4.500 0 1 0 3.500 4.500L12 6.500 9.500 4z" fill="#2b71b8" />
    </svg>
  </ImeBar>
);

const App = () => (
  <Page>
    <GlobalStyle />
    <TitleBar>
      <AppLogo />
      <AppTitle>中琅条码标签打印软件-V6.5.0 试用版 单机</AppTitle>
      <WindowButtons>
        <PlainButton aria-label="最小化"><Icon name="minimise" /></PlainButton>
        <PlainButton aria-label="还原"><Icon name="restore" /></PlainButton>
        <PlainButton aria-label="关闭"><Icon name="close" /></PlainButton>
      </WindowButtons>
    </TitleBar>

    <MenuBar>
      {menus.map(({ name, key, off }) => (
        <MenuItem key={key} disabled={off}>
          {name}(<u>{key}</u>)
        </MenuItem>
      ))}
    </MenuBar>

    <Toolbar $height={32} $from="#ededed">
      {mainTools.map((group) => (
        <ToolGroup key={group[0]}>
          {group.map((name) => (
            <ToolButton
              key={name}
              aria-label={name}
              $selected={name === "newDoc"}
              $width={name === "book" ? 24 : 30}
            >
              <Icon name={name} />
            </ToolButton>
          ))}
        </ToolGroup>
      ))}
    </Toolbar>
    <ToolbarSpacer />
    <Toolbar $height={31} $from="#ffffff">
      <Combos>
        <Select $width={230} disabled aria-label="字体">
          <option>Arial</option>
        </Select>
        <Select $width={80} $fill="#ffffff" disabled aria-label="字号">
          <option>12</option>
        </Select>
      </Combos>
      <ToolGroup>
        <ToolButton $width={27} aria-label="加粗"><Glyph>B</Glyph></ToolButton>
        <ToolButton $width={27} aria-label="斜体"><Glyph $serif $italic>I</Glyph></ToolButton>
        <ToolButton $width={27} aria-label="下划线"><Glyph $line="underline">U</Glyph></ToolButton>
        <ToolButton $width={27} aria-label="删除线"><Glyph $line="line-through">S</Glyph></ToolButton>
        <ToolButton $width={27} aria-label="弧形文字">
          <CurvedText><span>A</span><span>B</span><span>C</span></CurvedText>
        </ToolButton>
      </ToolGroup>
      <ToolGroup>
        {textAligns.map((name) => (
          <ToolButton key={name} aria-label={name} $width={27} $selected={name === "alignLeft"}>
            <Icon name={name} />
          </ToolButton>
        ))}
      </ToolGroup>
      <ToolGroup>
        {objectAligns.map((name) => (
          <ToolButton key={name} aria-label={name}><Icon name={name} /></ToolButton>
        ))}
      </ToolGroup>
      <ToolGroup>
        {pageAligns.map((name) => (
          <ToolButton key={name} aria-label={name}><Icon name={name} /></ToolButton>
        ))}
      </ToolGroup>
      <ToolGroup>
        {turns.map(({ text, path }) => (
          <ToolButton key={path} aria-label={text}>
            <Turn>
              <svg width="14" height="8" viewBox="0 0 14 8">{line(path, 1.5)}</svg>
              {text}
            </Turn>
          </ToolButton>
        ))}
      </ToolGroup>
    </Toolbar>

    <Workspace>
      <SideBar>
        {drawTools.map((name) => (
          <SideButton key={name} aria-label={name} $spaced={name === "pen"}>
            {name === "letter" ? <LetterA>A</LetterA> : <Icon name={name} />}
          </SideButton>
        ))}
      </SideBar>
      <Canvas>
        <DocumentDialog />
        <NetworkWidget />
        <InputMethodBar />
      </Canvas>
      <CollapseStrip aria-label="展开">&lt;</CollapseStrip>
    </Workspace>
  </Page>
);

export default App;
